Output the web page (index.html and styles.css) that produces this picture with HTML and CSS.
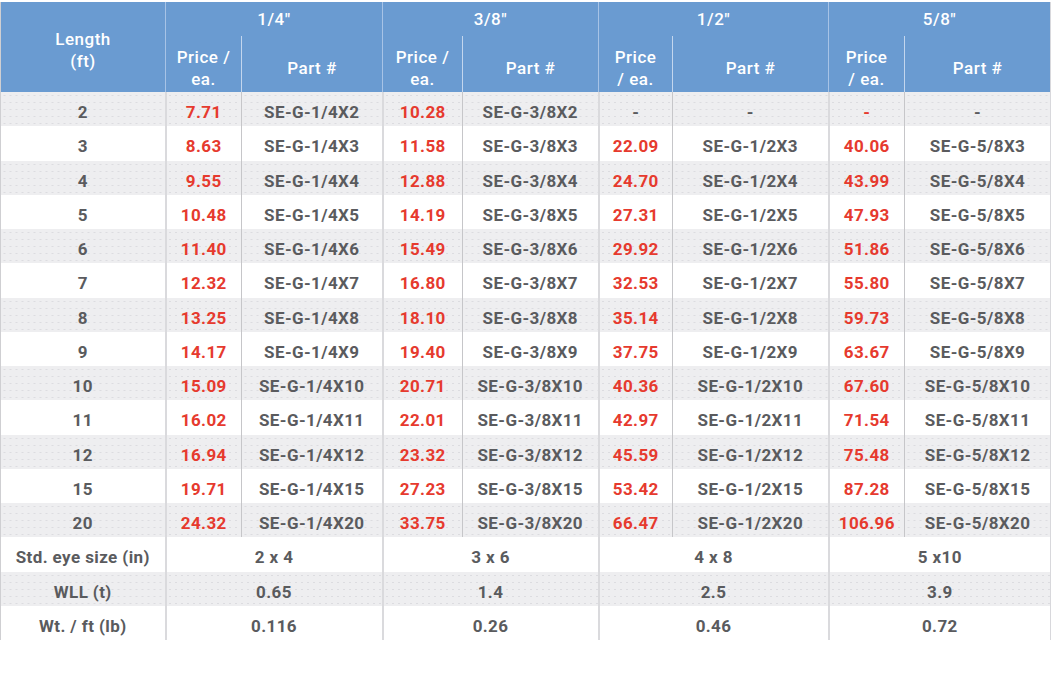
FILE: index.html
```html
<!DOCTYPE html>
<html>
<head>
<meta charset="utf-8">
<link rel="stylesheet" href="styles.css">
</head>
<body>
<div class="wrap">
<table class="sling">
  <colgroup>
    <col class="c-len">
    <col class="c-p1"><col class="c-n1">
    <col class="c-p2"><col class="c-n2">
    <col class="c-p3"><col class="c-n3">
    <col class="c-p4"><col class="c-n4">
  </colgroup>
  <thead>
    <tr class="h1">
      <th rowspan="2" class="len g">Length<br>(ft)</th>
      <th colspan="2" class="g">1/4"</th>
      <th colspan="2" class="g">3/8"</th>
      <th colspan="2" class="g">1/2"</th>
      <th colspan="2" class="g last">5/8"</th>
    </tr>
    <tr class="h2">
      <th class="pr">Price /<br>ea.</th><th class="g">Part #</th>
      <th class="pr">Price /<br>ea.</th><th class="g">Part #</th>
      <th class="pr">Price<br>/ ea.</th><th class="g">Part #</th>
      <th class="pr">Price<br>/ ea.</th><th class="g last">Part #</th>
    </tr>
  </thead>
  <tbody>
    <tr class="alt"><td class="g">2</td><td class="price">7.71</td><td class="g">SE-G-1/4X2</td><td class="price">10.28</td><td class="g">SE-G-3/8X2</td><td>-</td><td class="g">-</td><td class="price">-</td><td class="g last">-</td></tr>
    <tr><td class="g">3</td><td class="price">8.63</td><td class="g">SE-G-1/4X3</td><td class="price">11.58</td><td class="g">SE-G-3/8X3</td><td class="price">22.09</td><td class="g">SE-G-1/2X3</td><td class="price">40.06</td><td class="g last">SE-G-5/8X3</td></tr>
    <tr class="alt"><td class="g">4</td><td class="price">9.55</td><td class="g">SE-G-1/4X4</td><td class="price">12.88</td><td class="g">SE-G-3/8X4</td><td class="price">24.70</td><td class="g">SE-G-1/2X4</td><td class="price">43.99</td><td class="g last">SE-G-5/8X4</td></tr>
    <tr><td class="g">5</td><td class="price">10.48</td><td class="g">SE-G-1/4X5</td><td class="price">14.19</td><td class="g">SE-G-3/8X5</td><td class="price">27.31</td><td class="g">SE-G-1/2X5</td><td class="price">47.93</td><td class="g last">SE-G-5/8X5</td></tr>
    <tr class="alt"><td class="g">6</td><td class="price">11.40</td><td class="g">SE-G-1/4X6</td><td class="price">15.49</td><td class="g">SE-G-3/8X6</td><td class="price">29.92</td><td class="g">SE-G-1/2X6</td><td class="price">51.86</td><td class="g last">SE-G-5/8X6</td></tr>
    <tr><td class="g">7</td><td class="price">12.32</td><td class="g">SE-G-1/4X7</td><td class="price">16.80</td><td class="g">SE-G-3/8X7</td><td class="price">32.53</td><td class="g">SE-G-1/2X7</td><td class="price">55.80</td><td class="g last">SE-G-5/8X7</td></tr>
    <tr class="alt"><td class="g">8</td><td class="price">13.25</td><td class="g">SE-G-1/4X8</td><td class="price">18.10</td><td class="g">SE-G-3/8X8</td><td class="price">35.14</td><td class="g">SE-G-1/2X8</td><td class="price">59.73</td><td class="g last">SE-G-5/8X8</td></tr>
    <tr><td class="g">9</td><td class="price">14.17</td><td class="g">SE-G-1/4X9</td><td class="price">19.40</td><td class="g">SE-G-3/8X9</td><td class="price">37.75</td><td class="g">SE-G-1/2X9</td><td class="price">63.67</td><td class="g last">SE-G-5/8X9</td></tr>
    <tr class="alt"><td class="g">10</td><td class="price">15.09</td><td class="g">SE-G-1/4X10</td><td class="price">20.71</td><td class="g">SE-G-3/8X10</td><td class="price">40.36</td><td class="g">SE-G-1/2X10</td><td class="price">67.60</td><td class="g last">SE-G-5/8X10</td></tr>
    <tr><td class="g">11</td><td class="price">16.02</td><td class="g">SE-G-1/4X11</td><td class="price">22.01</td><td class="g">SE-G-3/8X11</td><td class="price">42.97</td><td class="g">SE-G-1/2X11</td><td class="price">71.54</td><td class="g last">SE-G-5/8X11</td></tr>
    <tr class="alt"><td class="g">12</td><td class="price">16.94</td><td class="g">SE-G-1/4X12</td><td class="price">23.32</td><td class="g">SE-G-3/8X12</td><td class="price">45.59</td><td class="g">SE-G-1/2X12</td><td class="price">75.48</td><td class="g last">SE-G-5/8X12</td></tr>
    <tr><td class="g">15</td><td class="price">19.71</td><td class="g">SE-G-1/4X15</td><td class="price">27.23</td><td class="g">SE-G-3/8X15</td><td class="price">53.42</td><td class="g">SE-G-1/2X15</td><td class="price">87.28</td><td class="g last">SE-G-5/8X15</td></tr>
    <tr class="alt"><td class="g">20</td><td class="price">24.32</td><td class="g">SE-G-1/4X20</td><td class="price">33.75</td><td class="g">SE-G-3/8X20</td><td class="price">66.47</td><td class="g">SE-G-1/2X20</td><td class="price">106.96</td><td class="g last">SE-G-5/8X20</td></tr>
    <tr class="foot"><td class="g">Std. eye size (in)</td><td colspan="2" class="g">2 x 4</td><td colspan="2" class="g">3 x 6</td><td colspan="2" class="g">4 x 8</td><td colspan="2" class="g last">5 x10</td></tr>
    <tr class="foot alt"><td class="g">WLL (t)</td><td colspan="2" class="g">0.65</td><td colspan="2" class="g">1.4</td><td colspan="2" class="g">2.5</td><td colspan="2" class="g last">3.9</td></tr>
    <tr class="foot"><td class="g">Wt. / ft (lb)</td><td colspan="2" class="g">0.116</td><td colspan="2" class="g">0.26</td><td colspan="2" class="g">0.46</td><td colspan="2" class="g last">0.72</td></tr>
  </tbody>
</table>
</div>
</body>
</html>
```

FILE: styles.css
```css
html, body {
  margin: 0;
  padding: 0;
  background: #ffffff;
}

.wrap {
  padding-top: 2px;
}

.sling {
  border-collapse: collapse;
  table-layout: fixed;
  width: 1050px;
  font-family: Roboto, "Liberation Sans", sans-serif;
  color: #5a5b5e;
  border-left: 1px solid #cfcfd2;
}

.c-len { width: 165px; }
.c-p1 { width: 76px; }
.c-n1 { width: 141px; }
.c-p2 { width: 80px; }
.c-n2 { width: 136px; }
.c-p3 { width: 74px; }
.c-n3 { width: 156px; }
.c-p4 { width: 76px; }
.c-n4 { width: 146px; }

.sling th {
  background: #6a9bd1;
  color: #ffffff;
  font-weight: 500;
  font-size: 17px;
  letter-spacing: 0.5px;
  text-align: center;
  vertical-align: middle;
  padding: 0;
  line-height: 22px;
}

.sling th.g {
  border-right: 1px solid #a7c3e6;
}

.sling th.pr {
  border-right: 1px solid #c3d6ee;
}

.sling th.last {
  border-right: 1px solid #d8d8dc;
}

.sling .h1 th {
  height: 34px;
}

.sling .h1 th.len {
  padding-top: 5px;
}

.sling .h2 th {
  height: 56px;
  padding-top: 8px;
  box-sizing: border-box;
}

.sling td {
  height: 34.25px;
  padding: 6px 0 0 0;
  box-sizing: border-box;
  text-align: center;
  vertical-align: middle;
  font-size: 17px;
  font-weight: 700;
  letter-spacing: 0.4px;
  line-height: 20px;
  border-right: 1px solid #c6c6c9;
  white-space: nowrap;
}

.sling td.g {
  border-right: 2px solid #dadadd;
}

.sling td.last {
  border-right: 1px solid #d8d8dc;
}

.sling td.price {
  color: #e63a2e;
}

.sling tr.alt td {
  background-color: #eeeef0;
  background-image: radial-gradient(circle, #dcdce0 0.6px, transparent 0.9px);
  background-size: 6px 7px;
}
```
